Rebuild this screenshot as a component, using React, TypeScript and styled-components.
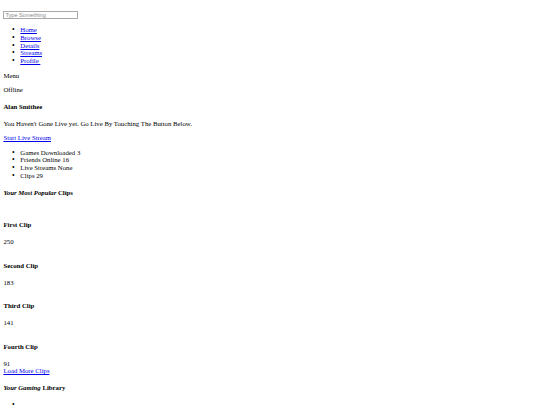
import styled, { createGlobalStyle } from "styled-components";

const GlobalStyle = createGlobalStyle`
    body {
        margin: 3.4px;
        font-family: "Liberation Serif", "Times New Roman", serif;
        font-size: 6.75px;
        line-height: 7.75px;
        color: #000;
        background: #fff;
    }
`

const Page = styled.div`
    display: block;
`

const SearchForm = styled.form`
    margin-top: 7.6px;
`

const SearchInput = styled.input`
    display: block;
    box-sizing: border-box;
    width: 75px;
    height: 8.5px;
    padding: 0 1px;
    border: 1px solid #a9a9a9;
    font-family: "Liberation Sans", Arial, sans-serif;
    font-size: 5.6px;
    outline: none;

    &::placeholder {
        color: #8a8a8a;
    }
`

const BulletList = styled.ul`
    margin: 6.75px 0;
    padding-left: 16.9px;
    list-style: none;
`

const Item = styled.li`
    line-height: 7.75px;

    &::before {
        content: "•";
        display: inline-block;
        width: 8.4px;
        margin-left: -8.4px;
        font-size: 7.5px;
    }
`

const Link = styled.a`
    color: #0000ee;
    text-decoration: underline;
    cursor: pointer;
`

const BlockLink = styled(Link)`
    display: block;
`

const Text = styled.p`
    margin: 6.75px 0;
`

const Heading = styled.h4`
    font-size: 6.75px;
    font-weight: bold;
    margin: 9px 0;
`

const ClipList = styled.div`
    display: block;
`

const Clip = styled.div`
    display: block;
`

const ClipThumb = styled.div`
    height: 7px;
`

const ClipCount = styled.div`
    display: block;
`

const GameCover = styled.div`
    display: inline-block;
    vertical-align: top;
    width: 60px;
    height: 40px;
`

const navItems = ["Home", "Browse", "Details", "Streams", "Profile\u00a0"];

const stats = [
    { label: "Games Downloaded", value: "3" },
    { label: "Friends Online", value: "16" },
    { label: "Live Streams", value: "None" },
    { label: "Clips", value: "29" },
];

const clips = [
    { id: 1, title: "First Clip", views: 250 },
    { id: 2, title: "Second Clip", views: 183 },
    { id: 3, title: "Third Clip", views: 141 },
    { id: 4, title: "Fourth Clip", views: 91 },
];

const App = () => {
    return (
        <Page>
            <GlobalStyle />
            <SearchForm onSubmit={e => e.preventDefault()}>
                <SearchInput placeholder="Type Something" />
            </SearchForm>
            <BulletList>
                {navItems.map(item => (
                    <Item key={item}>
                        <Link>{item}</Link>
                    </Item>
                ))}
            </BulletList>
            <Text>Menu</Text>
            <Text>Offline</Text>
            <Heading>Alan Smithee</Heading>
            <Text>You Haven't Gone Live yet. Go Live By Touching The Button Below.</Text>
            <Text>
                <Link>Start Live Stream</Link>
            </Text>
            <BulletList>
                {stats.map(stat => (
                    <Item key={stat.label}>
                        {stat.label} {stat.value}
                    </Item>
                ))}
            </BulletList>
            <Heading>
                <em>Your Most Popular</em> Clips
            </Heading>
            <ClipList>
                {clips.map(clip => (
                    <Clip key={clip.id}>
                        <ClipThumb />
                        <Heading>{clip.title}</Heading>
                        <ClipCount>{clip.views}</ClipCount>
                    </Clip>
                ))}
            </ClipList>
            <BlockLink>Load More Clips</BlockLink>
            <Heading>
                <em>Your Gaming</em> Library
            </Heading>
            <BulletList>
                <Item>
                    <GameCover />
                </Item>
            </BulletList>
        </Page>
    );
};

export default App;
